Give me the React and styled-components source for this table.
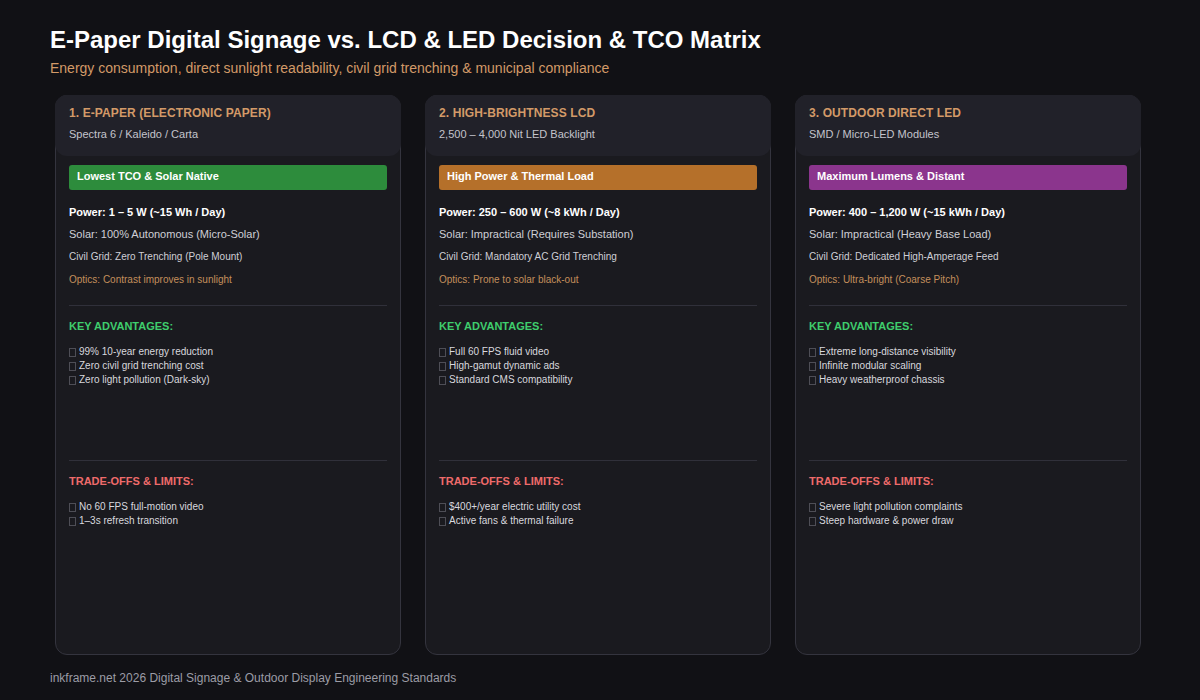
import React from "react";
import styled, { createGlobalStyle } from "styled-components";

const GlobalStyle = createGlobalStyle`
  html, body {
    margin: 0;
    padding: 0;
    background: #111115;
  }
  body {
    font-family: "Liberation Sans", Arial, sans-serif;
    color: #e6e6ea;
  }
`;

const Page = styled.div`
  width: 1200px;
  height: 700px;
  box-sizing: border-box;
  padding: 26px 50px 0 50px;
  display: flex;
  flex-direction: column;
`;

const Title = styled.h1`
  margin: 0;
  font-size: 24px;
  line-height: 28px;
  font-weight: 700;
  color: #ffffff;
`;

const Subtitle = styled.p`
  margin: 6px 0 0;
  font-size: 14px;
  line-height: 16px;
  color: #d39a68;
`;

const Grid = styled.div`
  display: grid;
  grid-template-columns: repeat(3, 346px);
  column-gap: 24px;
  margin: 19px 0 0 5px;
`;

const Card = styled.div`
  height: 560px;
  box-sizing: border-box;
  background: #1a1a1f;
  border: 1px solid #34343e;
  border-radius: 12px;
  display: flex;
  flex-direction: column;
`;

const Header = styled.div`
  margin: -1px -1px 0;
  background: #212129;
  border-radius: 12px;
  padding: 10px 14px 15px;
`;

const HeaderTitle = styled.div`
  font-size: 12px;
  line-height: 16px;
  font-weight: 700;
  color: #d39a68;
  letter-spacing: 0.1px;
`;

const HeaderSub = styled.div`
  margin-top: 6px;
  font-size: 11px;
  line-height: 14px;
  color: #c4c4cc;
`;

const Body = styled.div`
  flex: 1;
  padding: 9px 13px 0;
  display: flex;
  flex-direction: column;
`;

const Badge = styled.div`
  height: 25px;
  line-height: 22px;
  padding: 0 8px;
  border-radius: 3px;
  background: ${({ $tone }) => $tone};
  color: #ffffff;
  font-size: 11px;
  font-weight: 700;
`;

const Specs = styled.div`
  margin-top: 15px;
  display: flex;
  flex-direction: column;
  gap: 8px;
  padding-bottom: 18px;
`;

const Spec = styled.div`
  font-size: ${({ $small }) => ($small ? "10px" : "11px")};
  line-height: ${({ $small }) => ($small ? "15px" : "14px")};
  font-weight: ${({ $bold }) => ($bold ? 700 : 400)};
  color: ${({ $bold, $accent }) => ($bold ? "#ffffff" : $accent ? "#c48f5c" : "#cfcfd6")};
`;

const Section = styled.div`
  border-top: 1px solid #30303a;
  padding-top: 13px;
  height: ${({ $fill }) => ($fill ? "auto" : "155px")};
  box-sizing: border-box;
`;

const SectionTitle = styled.div`
  font-size: 11px;
  line-height: 14px;
  font-weight: 700;
  color: ${({ $good }) => ($good ? "#3fce6d" : "#ef6b6b")};
`;

const List = styled.ul`
  list-style: none;
  margin: 12px 0 0;
  padding: 0;
`;

const Item = styled.li`
  font-size: 10px;
  line-height: 14px;
  color: #d8d8de;
  display: flex;
  align-items: center;
`;

const Tofu = styled.span`
  display: inline-block;
  width: 5px;
  height: 7px;
  border: 1px solid #4e4e56;
  margin-right: 3px;
`;

const Footer = styled.div`
  margin-top: 16px;
  font-size: 12px;
  line-height: 14px;
  color: #9c9ca6;
`;

const options = [
  {
    title: "1. E-PAPER (ELECTRONIC PAPER)",
    sub: "Spectra 6 / Kaleido / Carta",
    badge: "Lowest TCO & Solar Native",
    tone: "#2d8c3c",
    power: "Power: 1 – 5 W (~15 Wh / Day)",
    solar: "Solar: 100% Autonomous (Micro-Solar)",
    civil: "Civil Grid: Zero Trenching (Pole Mount)",
    optics: "Optics: Contrast improves in sunlight",
    pros: ["99% 10-year energy reduction", "Zero civil grid trenching cost", "Zero light pollution (Dark-sky)"],
    cons: ["No 60 FPS full-motion video", "1–3s refresh transition"],
  },
  {
    title: "2. HIGH-BRIGHTNESS LCD",
    sub: "2,500 – 4,000 Nit LED Backlight",
    badge: "High Power & Thermal Load",
    tone: "#b5702a",
    power: "Power: 250 – 600 W (~8 kWh / Day)",
    solar: "Solar: Impractical (Requires Substation)",
    civil: "Civil Grid: Mandatory AC Grid Trenching",
    optics: "Optics: Prone to solar black-out",
    pros: ["Full 60 FPS fluid video", "High-gamut dynamic ads", "Standard CMS compatibility"],
    cons: ["$400+/year electric utility cost", "Active fans & thermal failure"],
  },
  {
    title: "3. OUTDOOR DIRECT LED",
    sub: "SMD / Micro-LED Modules",
    badge: "Maximum Lumens & Distant",
    tone: "#8b358d",
    power: "Power: 400 – 1,200 W (~15 kWh / Day)",
    solar: "Solar: Impractical (Heavy Base Load)",
    civil: "Civil Grid: Dedicated High-Amperage Feed",
    optics: "Optics: Ultra-bright (Coarse Pitch)",
    pros: ["Extreme long-distance visibility", "Infinite modular scaling", "Heavy weatherproof chassis"],
    cons: ["Severe light pollution complaints", "Steep hardware & power draw"],
  },
];

const OptionCard = ({ o }) => (
  <Card>
    <Header>
      <HeaderTitle>{o.title}</HeaderTitle>
      <HeaderSub>{o.sub}</HeaderSub>
    </Header>
    <Body>
      <Badge $tone={o.tone}>{o.badge}</Badge>
      <Specs>
        <Spec $bold>{o.power}</Spec>
        <Spec>{o.solar}</Spec>
        <Spec $small>{o.civil}</Spec>
        <Spec $small $accent>{o.optics}</Spec>
      </Specs>
      <Section>
        <SectionTitle $good>KEY ADVANTAGES:</SectionTitle>
        <List>
          {o.pros.map((p) => (
            <Item key={p}>
              <Tofu />
              {p}
            </Item>
          ))}
        </List>
      </Section>
      <Section $fill>
        <SectionTitle>TRADE-OFFS &amp; LIMITS:</SectionTitle>
        <List>
          {o.cons.map((c) => (
            <Item key={c}>
              <Tofu />
              {c}
            </Item>
          ))}
        </List>
      </Section>
    </Body>
  </Card>
);

export default function App() {
  return (
    <>
      <GlobalStyle />
      <Page>
        <Title>E-Paper Digital Signage vs. LCD &amp; LED Decision &amp; TCO Matrix</Title>
        <Subtitle>Energy consumption, direct sunlight readability, civil grid trenching &amp; municipal compliance</Subtitle>
        <Grid>
          {options.map((o) => (
            <OptionCard key={o.title} o={o} />
          ))}
        </Grid>
        <Footer>inkframe.net 2026 Digital Signage &amp; Outdoor Display Engineering Standards</Footer>
      </Page>
    </>
  );
}
